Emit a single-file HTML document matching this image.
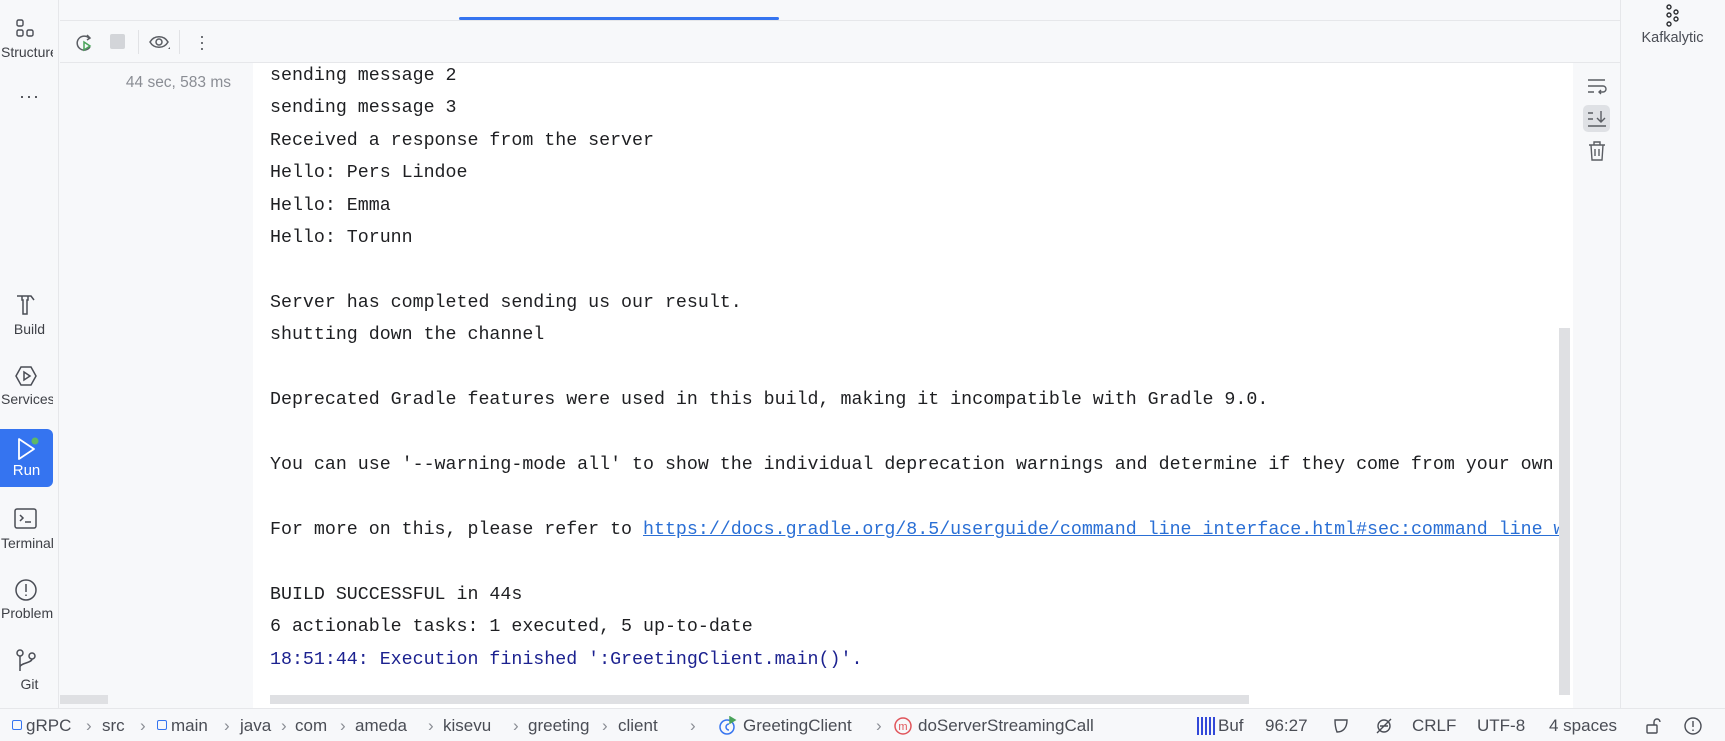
<!DOCTYPE html>
<html><head><meta charset="utf-8"><style>
*{margin:0;padding:0;box-sizing:border-box}
body{width:1725px;height:741px;overflow:hidden;background:#f7f8fa;font-family:"Liberation Sans",sans-serif;position:relative;color:#1e1f22}
.a{position:absolute}
.side{left:0;top:0;width:59px;height:708px;background:#f7f8fa;border-right:1px solid #e6e7ea}
.lbl{position:absolute;left:0;width:59px;text-align:center;font-size:14px;color:#3e4046;white-space:nowrap;overflow:hidden}
.lbl.l{left:1px;width:52px;text-align:left}
.ic{position:absolute;left:17px}
.con{left:253px;top:63px;width:1320px;height:645px;background:#fff;overflow:hidden}
.ln{position:absolute;left:17px;font-family:"Liberation Mono",monospace;font-size:18.3px;white-space:pre;color:#1e1f22;line-height:20px}
.sb{left:0;top:708px;width:1725px;height:33px;background:#f7f8fa;border-top:1px solid #e6e7ea;font-size:17px;color:#4a4d55}
.sb span{position:absolute;top:7px;white-space:nowrap}
.ch{color:#8a8d94}
</style></head><body>
<div class="a" style="left:60px;top:0;width:1561px;height:21px;border-bottom:1px solid #e6e7ea"></div>
<div class="a" style="left:459px;top:17px;width:320px;height:3px;background:#3574f0;border-radius:2px"></div>
<div class="a" style="left:60px;top:21px;width:1561px;height:42px;border-bottom:1px solid #e6e7ea"></div>
<svg class="a" style="left:74px;top:32px" width="22" height="22" viewBox="0 0 22 22" fill="none"><path d="M15 6a7 7 0 1 0 1 9" stroke="#5a5d63" stroke-width="1.5"/><path d="M13 3l3 3-3 2" stroke="#5a5d63" stroke-width="1.5"/><path d="M10 10l6 4-6 4z" stroke="#4aa35a" stroke-width="1.5"/></svg>
<div class="a" style="left:110px;top:34px;width:15px;height:15px;background:#d3d5d9;border-radius:2px"></div>
<div class="a" style="left:138px;top:30px;width:1px;height:24px;background:#e1e2e5"></div>
<svg class="a" style="left:148px;top:32px" width="24" height="22" viewBox="0 0 24 22" fill="none"><path d="M2 10c4-7 14-7 18 0c-4 7-14 7-18 0z" stroke="#5a5d63" stroke-width="1.5"/><circle cx="11" cy="10" r="3" stroke="#5a5d63" stroke-width="1.5"/><path d="M20 17l2 0 0-2z" fill="#5a5d63"/></svg>
<div class="a" style="left:179px;top:30px;width:1px;height:24px;background:#e1e2e5"></div>
<div class="a" style="left:199px;top:33px;font-size:18px;color:#5a5d63;line-height:6px;width:4px">·<br>·<br>·</div>
<div class="a side"></div>
<svg class="ic" style="top:18px;left:14px" width="24" height="24" viewBox="0 0 24 24" fill="none" stroke="#4a4d55" stroke-width="1.4"><rect x="3" y="2" width="6" height="6" rx="1.5"/><rect x="3" y="12" width="6" height="6" rx="1.5"/><rect x="13" y="12" width="6" height="6" rx="1.5"/></svg>
<div class="lbl l" style="top:44px">Structure</div>
<div class="lbl" style="top:86px;font-size:18px;letter-spacing:1px">···</div>
<svg class="ic" style="top:293px;left:14px" width="24" height="24" viewBox="0 0 24 24" fill="none" stroke="#4a4d55" stroke-width="1.5"><path d="M3 3h14l3 4M8 3v4l1 0v14h4V7h1V3"/></svg>
<div class="lbl" style="top:321px">Build</div>
<svg class="ic" style="top:364px;left:14px" width="24" height="24" viewBox="0 0 24 24" fill="none" stroke="#4a4d55" stroke-width="1.5"><path d="M7 3h10l5 9-5 9H7l-5-9z"/><path d="M10 8l6 4-6 4z"/></svg>
<div class="lbl l" style="top:391px">Services</div>
<div class="a" style="left:0;top:429px;width:53px;height:58px;background:#3574f0;border-radius:0 6px 6px 0"></div>
<svg class="ic" style="top:436px;left:15px" width="26" height="26" viewBox="0 0 26 26" fill="none"><path d="M4 3l15 10-15 10z" stroke="#fff" stroke-width="1.8" stroke-linejoin="round"/><circle cx="20" cy="5" r="3.5" fill="#5fb865"/></svg>
<div class="lbl" style="top:462px;width:53px;color:#fff;font-size:15px">Run</div>
<svg class="ic" style="top:507px;left:14px" width="24" height="24" viewBox="0 0 24 24" fill="none" stroke="#4a4d55" stroke-width="1.5"><rect x="1" y="2" width="21" height="19" rx="2"/><path d="M6 8l3 3-3 3M11 15h6"/></svg>
<div class="lbl l" style="top:535px">Terminal</div>
<svg class="ic" style="top:578px;left:14px" width="24" height="24" viewBox="0 0 24 24" fill="none" stroke="#4a4d55" stroke-width="1.5"><circle cx="12" cy="12" r="10"/><path d="M12 6v8M12 16.5v1.5"/></svg>
<div class="lbl l" style="top:605px">Problems</div>
<svg class="ic" style="top:649px;left:14px" width="24" height="24" viewBox="0 0 24 24" fill="none" stroke="#4a4d55" stroke-width="1.5"><circle cx="6" cy="4" r="3"/><circle cx="18" cy="7" r="3"/><path d="M6 7v15M6 18c0-4 12-4 12-8"/></svg>
<div class="lbl" style="top:676px">Git</div>
<div class="a" style="left:100px;top:74px;width:131px;text-align:right;font-size:15.5px;color:#8a8d94">44 sec, 583 ms</div>
<div class="a" style="left:60px;top:695px;width:48px;height:9px;background:#dfe0e3"></div>
<div class="a con">
<div class="ln" style="top:3px">sending message 2</div>
<div class="ln" style="top:35px">sending message 3</div>
<div class="ln" style="top:68px">Received a response from the server</div>
<div class="ln" style="top:100px">Hello: Pers Lindoe</div>
<div class="ln" style="top:133px">Hello: Emma</div>
<div class="ln" style="top:165px">Hello: Torunn</div>
<div class="ln" style="top:230px">Server has completed sending us our result.</div>
<div class="ln" style="top:262px">shutting down the channel</div>
<div class="ln" style="top:327px">Deprecated Gradle features were used in this build, making it incompatible with Gradle 9.0.</div>
<div class="ln" style="top:392px">You can use '--warning-mode all' to show the individual deprecation warnings and determine if they come from your own scripts or plugins.</div>
<div class="ln" style="top:457px">For more on this, please refer to <span style="color:#2a6fd5;text-decoration:underline">https://docs.gradle.org/8.5/userguide/command_line_interface.html#sec:command_line_warnings</span></div>
<div class="ln" style="top:522px">BUILD SUCCESSFUL in 44s</div>
<div class="ln" style="top:554px">6 actionable tasks: 1 executed, 5 up-to-date</div>
<div class="ln" style="top:587px;color:#1c2290">18:51:44: Execution finished ':GreetingClient.main()'.</div>
<div class="a" style="left:17px;top:632px;width:979px;height:9px;background:#dfe0e3"></div>
</div>
<div class="a" style="left:1559px;top:63px;width:14px;height:645px;background:#fff"></div>
<div class="a" style="left:1559px;top:328px;width:11px;height:367px;background:#dfe0e3"></div>
<div class="a" style="left:1573px;top:63px;width:47px;height:645px;background:#f7f8fa"></div>
<svg class="a" style="left:1586px;top:76px" width="22" height="22" viewBox="0 0 22 22" fill="none" stroke="#5a5d63" stroke-width="1.4"><path d="M2 4h17M2 10h15a3 3 0 0 1 0 6h-4M15 14l-2 2 2 2M2 16h6"/></svg>
<div class="a" style="left:1583px;top:105px;width:27px;height:27px;background:#dfe1e5;border-radius:5px"></div>
<svg class="a" style="left:1586px;top:108px" width="22" height="22" viewBox="0 0 22 22" fill="none" stroke="#5a5d63" stroke-width="1.4"><path d="M2 5h5M2 11h5M2 18h18M15 3v11M11 10l4 4 4-4"/></svg>
<svg class="a" style="left:1587px;top:140px" width="20" height="22" viewBox="0 0 20 22" fill="none" stroke="#5a5d63" stroke-width="1.4"><path d="M2 5h16M7 5V2h6v3M4 5l1 15h10l1-15M8 9v7M12 9v7"/></svg>
<div class="a" style="left:1620px;top:0;width:105px;height:708px;border-left:1px solid #e6e7ea;background:#f7f8fa"></div>
<svg class="a" style="left:1664px;top:4px" width="16" height="24" viewBox="0 0 16 24" fill="none" stroke="#2b2d30" stroke-width="1.4"><circle cx="5" cy="3" r="2"/><circle cx="5" cy="11" r="2"/><circle cx="5" cy="20" r="2"/><circle cx="12" cy="8" r="2"/><circle cx="12" cy="15" r="2"/></svg>
<div class="a" style="left:1620px;top:30px;width:105px;text-align:center;font-size:14.5px;color:#4a4d55">Kafkalytic</div>
<div class="a sb">
<span style="left:12px;top:11px;width:10px;height:10px;border:1.5px solid #3574f0;border-radius:2px"></span>
<span style="left:26px">gRPC</span><span class="ch" style="left:86px">›</span>
<span style="left:102px">src</span><span class="ch" style="left:140px">›</span>
<span style="left:157px;top:11px;width:10px;height:10px;border:1.5px solid #3574f0;border-radius:2px"></span>
<span style="left:171px">main</span><span class="ch" style="left:224px">›</span>
<span style="left:240px">java</span><span class="ch" style="left:281px">›</span>
<span style="left:295px">com</span><span class="ch" style="left:340px">›</span>
<span style="left:355px">ameda</span><span class="ch" style="left:428px">›</span>
<span style="left:443px">kisevu</span><span class="ch" style="left:513px">›</span>
<span style="left:528px">greeting</span><span class="ch" style="left:602px">›</span>
<span style="left:618px">client</span><span class="ch" style="left:690px">›</span>
<svg style="position:absolute;left:717px;top:7px" width="20" height="20" viewBox="0 0 20 20" fill="none" stroke="#3574f0" stroke-width="1.5"><circle cx="10" cy="11" r="7"/><path d="M12 8a3 3 0 1 0 0 6"/><path d="M13 1l5 3-5 3z" fill="#4aa35a" stroke="#4aa35a"/></svg>
<span style="left:743px">GreetingClient</span><span class="ch" style="left:876px">›</span>
<svg style="position:absolute;left:893px;top:7px" width="20" height="20" viewBox="0 0 20 20" fill="none"><circle cx="10" cy="10" r="8" stroke="#e0545a" stroke-width="1.5"/><text x="10" y="14" text-anchor="middle" font-size="11" fill="#e0545a" font-family="Liberation Sans">m</text></svg>
<span style="left:918px">doServerStreamingCall</span>
<span style="left:1197px;top:8px;width:20px;height:18px;background:repeating-linear-gradient(90deg,#3248d8 0 2px,transparent 2px 4px)"></span>
<span style="left:1218px">Buf</span>
<span style="left:1265px">96:27</span>
<svg style="position:absolute;left:1332px;top:8px" width="18" height="18" viewBox="0 0 18 18" fill="none" stroke="#4a4d55" stroke-width="1.4"><path d="M3 3h12c0 8-4 12-10 12C3 10 3 6 3 3z"/></svg>
<svg style="position:absolute;left:1374px;top:7px" width="20" height="20" viewBox="0 0 20 20" fill="none" stroke="#4a4d55" stroke-width="1.4"><circle cx="10" cy="10" r="6"/><path d="M3 17L17 3M6 10h8"/></svg>
<span style="left:1412px">CRLF</span>
<span style="left:1477px">UTF-8</span>
<span style="left:1549px">4 spaces</span>
<svg style="position:absolute;left:1645px;top:8px" width="18" height="18" viewBox="0 0 18 18" fill="none" stroke="#4a4d55" stroke-width="1.4"><rect x="2" y="8" width="10" height="8" rx="1"/><path d="M9 8V5a3 3 0 0 1 6 0"/></svg>
<svg style="position:absolute;left:1683px;top:7px" width="20" height="20" viewBox="0 0 20 20" fill="none" stroke="#4a4d55" stroke-width="1.4"><circle cx="10" cy="10" r="8"/><path d="M10 5v6M10 13.5v1.5"/></svg>
</div>
</body></html>
